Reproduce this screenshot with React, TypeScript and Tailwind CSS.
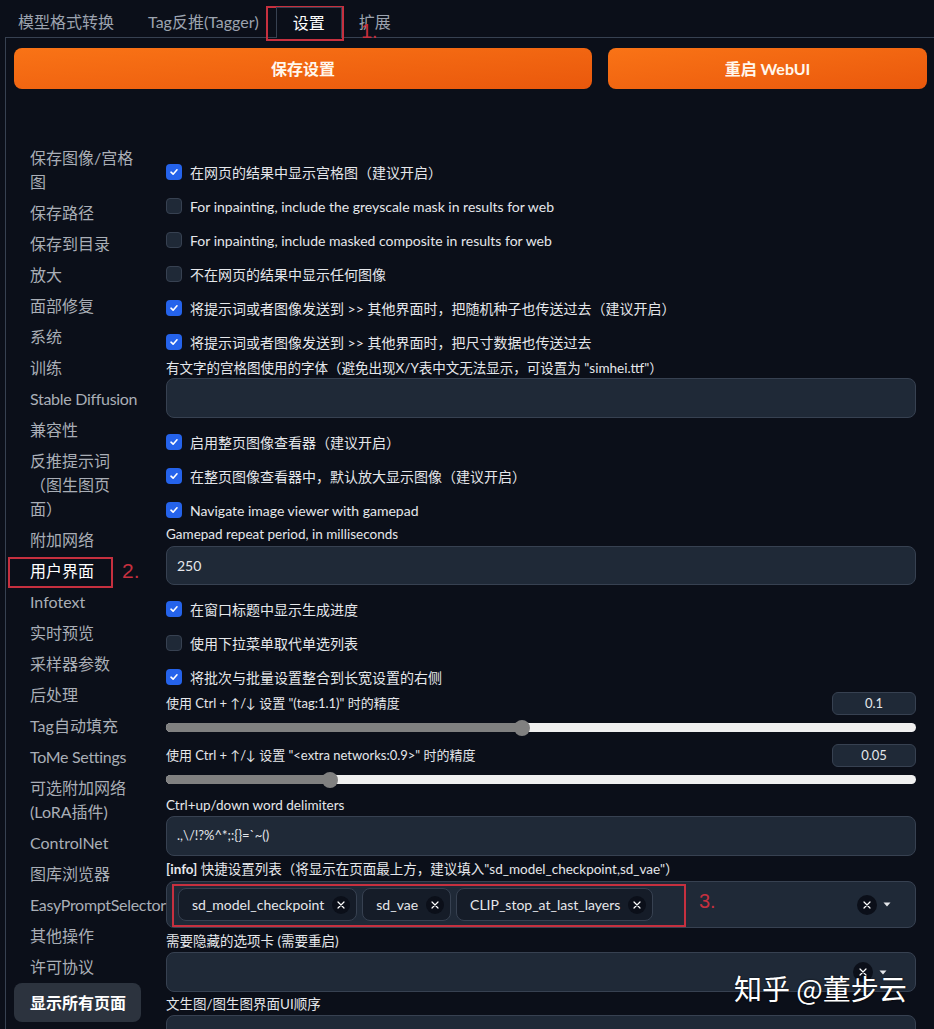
import React from "react";

function Tab({ label, active }: { label: string; active?: boolean }) {
  if (active) {
    return (
      <div className="relative z-10 mb-[-1px] flex h-[31px] items-center border border-b-0 border-[#374151] bg-[#0b0f19] px-[16px] text-[16px] text-white">
        {label}
      </div>
    );
  }
  return (
    <div className="flex h-[30px] items-center px-[17px] text-[16px] text-[#9ca3af]">
      {label}
    </div>
  );
}

function Check({ on, label }: { on: boolean; label: string }) {
  return (
    <div className="flex h-[34px] items-center gap-[8px]">
      {on ? (
        <div className="flex h-[16px] w-[16px] items-center justify-center rounded-[4px] bg-[#2563eb]">
          <svg width="10" height="10" viewBox="0 0 10 10">
            <path d="M2 5.2 L4.1 7.2 L8 2.8" fill="none" stroke="white" strokeWidth="1.6" strokeLinecap="round" strokeLinejoin="round" />
          </svg>
        </div>
      ) : (
        <div className="h-[16px] w-[16px] rounded-[4px] border border-[#374151] bg-[#1f2937]" />
      )}
      <span className="whitespace-nowrap text-[14px] text-[#e5e7eb]">{label}</span>
    </div>
  );
}

function Label({ children, className = "" }: { children: React.ReactNode; className?: string }) {
  return (
    <div className={"h-[18px] whitespace-nowrap text-[13.5px] leading-[18px] text-[#e5e7eb] " + className}>
      {children}
    </div>
  );
}

function Slider({ label, value, pct, className = "" }: { label: string; value: string; pct: string; className?: string }) {
  return (
    <div className={"h-[52px] " + className}>
      <div className="flex h-[23px] items-center justify-between">
        <span className="text-[13px] text-[#e5e7eb]">{label}</span>
        <div className="flex h-[23px] w-[84px] items-center justify-center rounded-[6px] border border-[#374151] bg-[#1f2937] text-[13px] text-[#e5e7eb]">
          {value}
        </div>
      </div>
      <div className="relative mt-[8px] h-[9px] rounded-full bg-[#f0f0f0]">
        <div className="absolute left-0 top-0 h-full rounded-full bg-[#808080]" style={{ width: pct }} />
        <div
          className="absolute top-1/2 h-[16px] w-[16px] -translate-x-1/2 -translate-y-1/2 rounded-full bg-[#808080]"
          style={{ left: pct }}
        />
      </div>
    </div>
  );
}

function XCircle({ size = 18 }: { size?: number }) {
  return (
    <div
      className={
        (size === 18 ? "h-[18px] w-[18px]" : "h-[20px] w-[20px]") +
        " flex items-center justify-center rounded-full bg-[#0b0f19]"
      }
    >
      <svg width="8" height="8" viewBox="0 0 8 8">
        <path d="M1 1 L7 7 M7 1 L1 7" stroke="white" strokeWidth="1.2" strokeLinecap="round" />
      </svg>
    </div>
  );
}

function Caret() {
  return (
    <svg width="8" height="5" viewBox="0 0 8 5">
      <path d="M0.5 0.5 L7.5 0.5 L4 4.5 Z" fill="#e5e7eb" />
    </svg>
  );
}

function Chip({ label }: { label: string }) {
  return (
    <div className="flex h-[33px] items-center gap-[8px] rounded-[8px] border border-[#374151] bg-[#151c28] pl-[13px] pr-[6px]">
      <span className="text-[14px] text-[#e5e7eb]">{label}</span>
      <XCircle />
    </div>
  );
}

const sidebar: { t: React.ReactNode; k: string; nowrap?: boolean; active?: boolean }[] = [
  { k: "a", t: "保存图像/宫格图" },
  { k: "b", t: "保存路径" },
  { k: "c", t: "保存到目录" },
  { k: "d", t: "放大" },
  { k: "e", t: "面部修复" },
  { k: "f", t: "系统" },
  { k: "g", t: "训练" },
  { k: "h", t: "Stable Diffusion", nowrap: true },
  { k: "i", t: "兼容性" },
  {
    k: "j",
    t: (
      <>
        反推提示词
        <br />
        （图生图页
        <br />
        面）
      </>
    ),
  },
  { k: "k", t: "附加网络" },
  { k: "l", t: "用户界面", active: true },
  { k: "m", t: "Infotext" },
  { k: "n", t: "实时预览" },
  { k: "o", t: "采样器参数" },
  { k: "p", t: "后处理" },
  { k: "q", t: "Tag自动填充" },
  { k: "r", t: "ToMe Settings", nowrap: true },
  { k: "s", t: "可选附加网络(LoRA插件)" },
  { k: "t", t: "ControlNet" },
  { k: "u", t: "图库浏览器" },
  { k: "v", t: "EasyPromptSelector", nowrap: true },
  { k: "w", t: "其他操作" },
  { k: "x", t: "许可协议" },
];

export default function App() {
  return (
    <div className="relative h-[1029px] w-[934px] overflow-hidden bg-[#0b0f19] font-[family-name:Lato,'Noto_Sans_CJK_SC',sans-serif] text-[#e5e7eb]">
      {/* tabs */}
      <div className="flex h-[37px] items-end pl-px">
        <Tab label="模型格式转换" />
        <Tab label="Tag反推(Tagger)" />
        <Tab label="设置" active />
        <Tab label="扩展" />
      </div>

      {/* panel */}
      <div className="ml-[5px] w-[940px] border-l border-t border-[#374151] pl-[8px] pt-[10px]">
        <div className="flex gap-[16px]">
          <div className="flex h-[41px] w-[578px] items-center justify-center rounded-[8px] bg-gradient-to-br from-[#f97316] to-[#ea580c] text-[16px] font-bold text-[#fff7ed]">
            保存设置
          </div>
          <div className="flex h-[41px] w-[319px] items-center justify-center rounded-[8px] bg-gradient-to-br from-[#f97316] to-[#ea580c] text-[16px] font-bold text-[#fff7ed]">
            重启 WebUI
          </div>
        </div>

        <div className="mt-[57px] flex gap-[16px]">
          {/* sidebar */}
          <div className="relative z-10 w-[136px] shrink-0">
            <div className="flex flex-col gap-[7px]">
              {sidebar.map((s) => (
                <div
                  key={s.k}
                  className={
                    "px-[16px] text-[16px] leading-[24px] " +
                    (s.nowrap ? "whitespace-nowrap tracking-[-0.3px] " : "") +
                    (s.active ? "text-white" : "text-[#a9aeb6]")
                  }
                >
                  {s.t}
                </div>
              ))}
            </div>
            <div className="mt-[4px] flex h-[39px] w-[127px] items-center rounded-[8px] bg-[#2c333e] pl-[16px] text-[16px] font-bold text-white">
              显示所有页面
            </div>
          </div>

          {/* content */}
          <div className="w-[750px] shrink-0 pt-[9px]">
            <Check on label="在网页的结果中显示宫格图（建议开启）" />
            <Check on={false} label="For inpainting, include the greyscale mask in results for web" />
            <Check on={false} label="For inpainting, include masked composite in results for web" />
            <Check on={false} label="不在网页的结果中显示任何图像" />
            <Check on label="将提示词或者图像发送到 >> 其他界面时，把随机种子也传送过去（建议开启）" />
            <Check on label="将提示词或者图像发送到 >> 其他界面时，把尺寸数据也传送过去" />
            <Label>有文字的宫格图使用的字体（避免出现X/Y表中文无法显示，可设置为 "simhei.ttf"）</Label>
            <div className="mt-px h-[40px] rounded-[8px] border border-[#374151] bg-[#1f2937]" />

            <div className="mt-[7px]">
              <Check on label="启用整页图像查看器（建议开启）" />
              <Check on label="在整页图像查看器中，默认放大显示图像（建议开启）" />
              <Check on label="Navigate image viewer with gamepad" />
            </div>
            <Label className="mt-[-2px]">Gamepad repeat period, in milliseconds</Label>
            <div className="mt-[3px] flex h-[39px] items-center rounded-[8px] border border-[#374151] bg-[#1f2937] pl-[10px] text-[14px]">
              250
            </div>

            <div className="mt-[7px]">
              <Check on label="在窗口标题中显示生成进度" />
              <Check on={false} label="使用下拉菜单取代单选列表" />
              <Check on label="将批次与批量设置整合到长宽设置的右侧" />
            </div>

            <Slider className="mt-[-2px]" label={'使用 Ctrl + ↑/↓ 设置 "(tag:1.1)" 时的精度'} value="0.1" pct="47.5%" />
            <Slider label={'使用 Ctrl + ↑/↓ 设置 "<extra networks:0.9>" 时的精度'} value="0.05" pct="21.9%" />

            <Label>Ctrl+up/down word delimiters</Label>
            <div className="mt-[2px] flex h-[40px] items-center rounded-[8px] border border-[#374151] bg-[#1f2937] pl-[10px] text-[13px]">
              {".,\\/!?%^*;:{}=`~()"}
            </div>

            <Label className="mt-[4px]">
              <span className="font-bold">[info]</span> 快捷设置列表（将显示在页面最上方，建议填入"sd_model_checkpoint,sd_vae"）
            </Label>
            <div className="mt-[3px] flex h-[47px] items-center justify-between rounded-[8px] border border-[#374151] bg-[#1f2937] pl-[11px] pr-[24px]">
              <div className="flex items-center gap-[5px]">
                <Chip label="sd_model_checkpoint" />
                <Chip label="sd_vae" />
                <Chip label="CLIP_stop_at_last_layers" />
              </div>
              <div className="flex items-center gap-[6px]">
                <XCircle size={20} />
                <Caret />
              </div>
            </div>

            <Label className="mt-[4px]">需要隐藏的选项卡 (需要重启)</Label>
            <div className="mt-[2px] flex h-[40px] items-center justify-end rounded-[8px] border border-[#374151] bg-[#1f2937] pr-[24px]">
              <div className="mr-[4px] flex items-center gap-[6px]">
                <XCircle size={20} />
                <Caret />
              </div>
            </div>

            <Label className="mt-[3px]">文生图/图生图界面UI顺序</Label>
            <div className="mt-[2px] h-[40px] rounded-[8px] border border-[#374151] bg-[#1f2937]" />
          </div>
        </div>
      </div>

      {/* annotations */}
      <div className="pointer-events-none absolute left-[266px] top-[6px] h-[35px] w-[78px] border-2 border-[#c6303f]" />
      <div className="pointer-events-none absolute left-[361px] top-[19px] font-[family-name:'Liberation_Sans',sans-serif] text-[20px] leading-[24px] text-[#c6303f]">
        1.
      </div>
      <div className="pointer-events-none absolute left-[8px] top-[557px] z-20 h-[31px] w-[105px] border-2 border-[#c6303f]" />
      <div className="pointer-events-none absolute left-[122px] top-[559px] font-[family-name:'Liberation_Sans',sans-serif] text-[21px] leading-[24px] text-[#c6303f]">
        2.
      </div>
      <div className="pointer-events-none absolute left-[172px] top-[884px] z-20 h-[43px] w-[514px] border-2 border-[#c6303f]" />
      <div className="pointer-events-none absolute left-[699px] top-[889px] font-[family-name:'Liberation_Sans',sans-serif] text-[20px] leading-[24px] text-[#c6303f]">
        3.
      </div>

      {/* watermark */}
      <div className="pointer-events-none absolute left-[734px] top-[968px] z-20 whitespace-nowrap font-[family-name:'Noto_Sans_CJK_SC',sans-serif] text-[28px] leading-[40px] text-white [text-shadow:0_0_2px_rgba(0,0,0,0.8)]">
        知乎 @董步云
      </div>
    </div>
  );
}
